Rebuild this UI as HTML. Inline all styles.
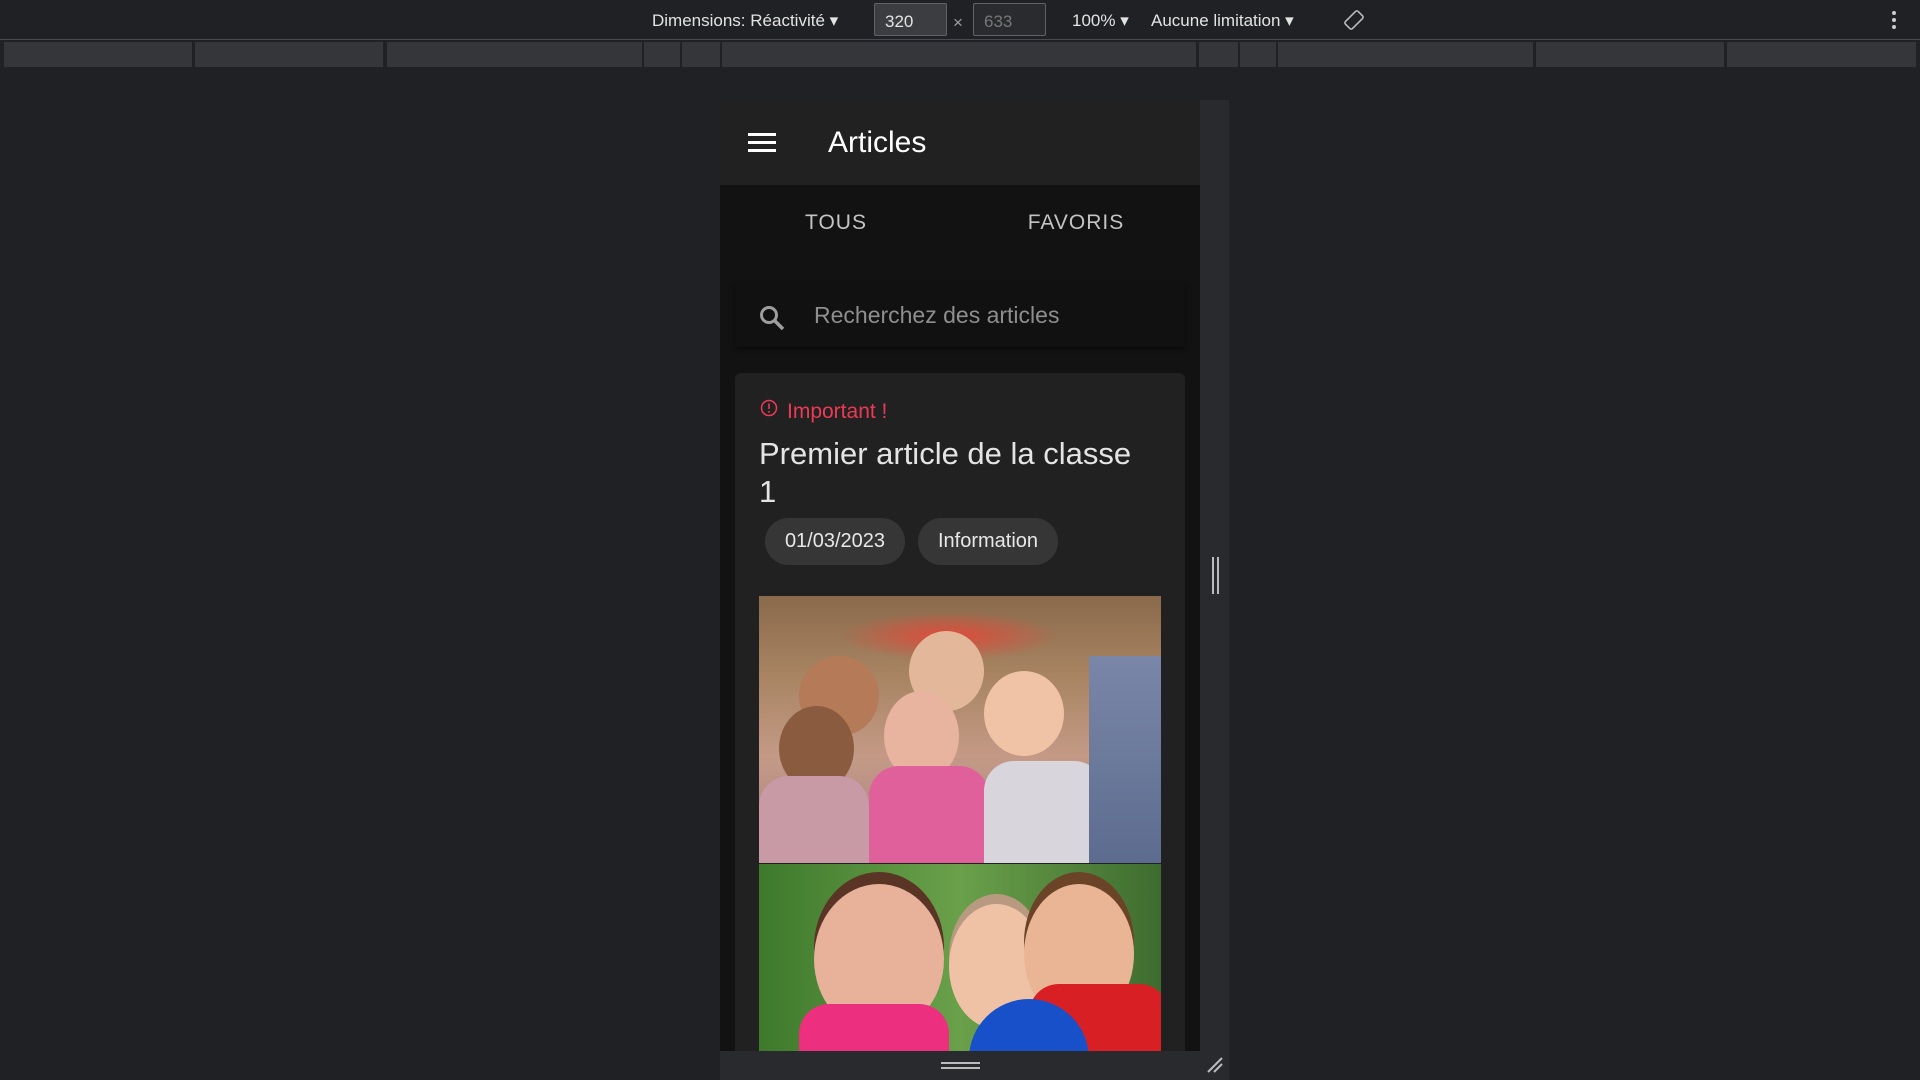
<!DOCTYPE html>
<html><head><meta charset="utf-8"><style>
*{margin:0;padding:0;box-sizing:border-box}
body{width:1920px;height:1080px;background:#202124;position:relative;overflow:hidden;font-family:"Liberation Sans",Arial,sans-serif}
.a{position:absolute}
.tb{font-size:17px;color:#e3e3e3;top:11px}
.seg{position:absolute;top:42px;height:25px;background:#35363a}
.inp{position:absolute;top:3px;height:33px;border:1px solid #5f6368;background:#3c3d40;border-radius:2px;font-size:17px;padding:8px 10px}
.chip{position:absolute;top:518px;height:47px;border-radius:24px;background:#363636;color:#e8e8e8;font-size:20px;line-height:47px;text-align:center}
</style></head><body>
<div class="a tb" style="left:652px">Dimensions: Réactivité ▾</div>
<div class="inp" style="left:874px;width:73px;color:#e3e3e3">320</div>
<div class="a" style="left:953px;top:13px;color:#9aa0a6;font-size:17px">×</div>
<div class="inp" style="left:973px;width:73px;color:#777;background:#2a2b2e">633</div>
<div class="a tb" style="left:1072px">100% ▾</div>
<div class="a tb" style="left:1151px">Aucune limitation ▾</div>
<svg class="a" style="left:1343px;top:9px" width="22" height="22" viewBox="0 0 22 22"><g transform="rotate(45 11 11)" fill="none" stroke="#bbb" stroke-width="1.6"><rect x="6" y="2" width="10" height="18" rx="2"/></g></svg>
<div class="a" style="left:1892px;top:11px;width:4px;height:4px;border-radius:2px;background:#ccc;box-shadow:0 7px 0 #ccc,0 14px 0 #ccc"></div>
<div class="a" style="left:0;top:39px;width:1920px;height:1px;background:#4a4a4a"></div>
<div class="seg" style="left:4px;width:188px"></div><div class="seg" style="left:195px;width:188px"></div><div class="seg" style="left:387px;width:255px"></div><div class="seg" style="left:644px;width:36px"></div><div class="seg" style="left:682px;width:38px"></div><div class="seg" style="left:722px;width:474px"></div><div class="seg" style="left:1199px;width:39px"></div><div class="seg" style="left:1240px;width:36px"></div><div class="seg" style="left:1278px;width:255px"></div><div class="seg" style="left:1536px;width:188px"></div><div class="seg" style="left:1727px;width:189px"></div>

<!-- phone -->
<div class="a" style="left:720px;top:100px;width:480px;height:951px;background:#121212;overflow:hidden">
 <div class="a" style="left:0;top:0;width:480px;height:85px;background:#212121"></div>
 <div class="a" style="left:28px;top:33px;width:28px;height:3px;background:#fff;box-shadow:0 8px 0 #fff,0 16px 0 #fff"></div>
 <div class="a" style="left:108px;top:26px;color:#fff;font-size:30px">Articles</div>
 <div class="a" style="left:0;top:111px;width:232px;text-align:center;color:#c4c4c4;font-size:21px;letter-spacing:1px">TOUS</div>
 <div class="a" style="left:240px;top:111px;width:232px;text-align:center;color:#c4c4c4;font-size:21px;letter-spacing:1px">FAVORIS</div>
 <div class="a" style="left:15px;top:184px;width:450px;height:63px;background:#111;box-shadow:0 2px 4px rgba(0,0,0,.5)"></div>
 <svg class="a" style="left:38px;top:204px" width="28" height="28" viewBox="0 0 28 28"><circle cx="11" cy="11" r="7.5" fill="none" stroke="#9e9e9e" stroke-width="3"/><path d="M16.5 16.5 L25 25" stroke="#9e9e9e" stroke-width="3.5"/></svg>
 <div class="a" style="left:94px;top:202px;color:#8e8e8e;font-size:23px">Recherchez des articles</div>
 <div class="a" style="left:15px;top:273px;width:450px;height:700px;background:#212121;border-radius:6px"></div>
 <svg class="a" style="left:40px;top:299px" width="18" height="18" viewBox="0 0 18 18"><circle cx="9" cy="9" r="7.5" fill="none" stroke="#ec3a55" stroke-width="1.5"/><path d="M9 4.5v5.5M9 12v1.6" stroke="#ec3a55" stroke-width="1.6"/></svg>
 <div class="a" style="left:67px;top:300px;color:#ec3a55;font-size:21px">Important !</div>
 <div class="a" style="left:39px;top:335px;color:#e4e4e4;font-size:31px;line-height:38px;width:385px">Premier article de la classe 1</div>
 <div class="chip" style="left:45px;top:418px;width:140px">01/03/2023</div>
 <div class="chip" style="left:198px;top:418px;width:140px">Information</div>
 <div class="a" style="left:39px;top:496px;width:402px;height:267px;overflow:hidden;background:linear-gradient(180deg,#8a6a4c 0%,#a88462 30%,#c49a86 60%,#a77e82 100%)">
  <div class="a" style="left:80px;top:15px;width:220px;height:50px;background:radial-gradient(ellipse,#e04a3a,transparent 70%)"></div>
  <div class="a" style="left:40px;top:60px;width:80px;height:80px;border-radius:50%;background:#b57a58"></div>
  <div class="a" style="left:150px;top:35px;width:75px;height:80px;border-radius:50%;background:#e3b89a"></div>
  <div class="a" style="left:20px;top:110px;width:75px;height:85px;border-radius:50%;background:#8a5b3e"></div>
  <div class="a" style="left:125px;top:95px;width:75px;height:90px;border-radius:50%;background:#e8b4a0"></div>
  <div class="a" style="left:225px;top:75px;width:80px;height:85px;border-radius:50%;background:#f0c3a6"></div>
  <div class="a" style="left:0;top:180px;width:110px;height:90px;background:#c89aa6;border-radius:30px 30px 0 0"></div>
  <div class="a" style="left:110px;top:170px;width:120px;height:100px;background:#e0609c;border-radius:30px 30px 0 0"></div>
  <div class="a" style="left:225px;top:165px;width:120px;height:105px;background:#d8d6dc;border-radius:30px 30px 0 0"></div>
  <div class="a" style="left:330px;top:60px;width:72px;height:210px;background:linear-gradient(#7a86a8,#5c6c8e)"></div>
 </div>
 <div class="a" style="left:39px;top:764px;width:402px;height:190px;overflow:hidden;background:linear-gradient(90deg,#3e7a2c,#6aa04a 50%,#3e6c30)">
  <div class="a" style="left:55px;top:20px;width:130px;height:150px;border-radius:50%;background:#e8b29a;box-shadow:0 -12px 0 #5a3424"></div>
  <div class="a" style="left:190px;top:40px;width:95px;height:125px;border-radius:50%;background:#efc2a6;box-shadow:0 -10px 0 #b79a80"></div>
  <div class="a" style="left:265px;top:20px;width:110px;height:140px;border-radius:50%;background:#eab595;box-shadow:0 -12px 0 #6b4428"></div>
  <div class="a" style="left:40px;top:140px;width:150px;height:60px;background:#ec2f7e;border-radius:30px 30px 0 0"></div>
  <div class="a" style="left:270px;top:120px;width:140px;height:80px;background:#d82024;border-radius:30px 30px 0 0"></div>
  <div class="a" style="left:210px;top:135px;width:120px;height:120px;border-radius:50%;background:conic-gradient(#1750c8 0 25%,#f0e040 0 45%,#fff 0 55%,#1750c8 0)"></div>
 </div>
</div>
<div class="a" style="left:1200px;top:100px;width:29px;height:951px;background:#292a2d"></div>
<div class="a" style="left:1212px;top:557px;width:2px;height:37px;background:#bbb;box-shadow:5px 0 0 #bbb"></div>
<div class="a" style="left:720px;top:1051px;width:509px;height:29px;background:#292a2d"></div>
<div class="a" style="left:941px;top:1062px;width:39px;height:2px;background:#bbb;box-shadow:0 5px 0 #bbb"></div>
<svg class="a" style="left:1205px;top:1055px" width="20" height="20" viewBox="0 0 20 20"><path d="M3 17L17 3M9 17L17 9" stroke="#bbb" stroke-width="2"/></svg>
</body></html>
